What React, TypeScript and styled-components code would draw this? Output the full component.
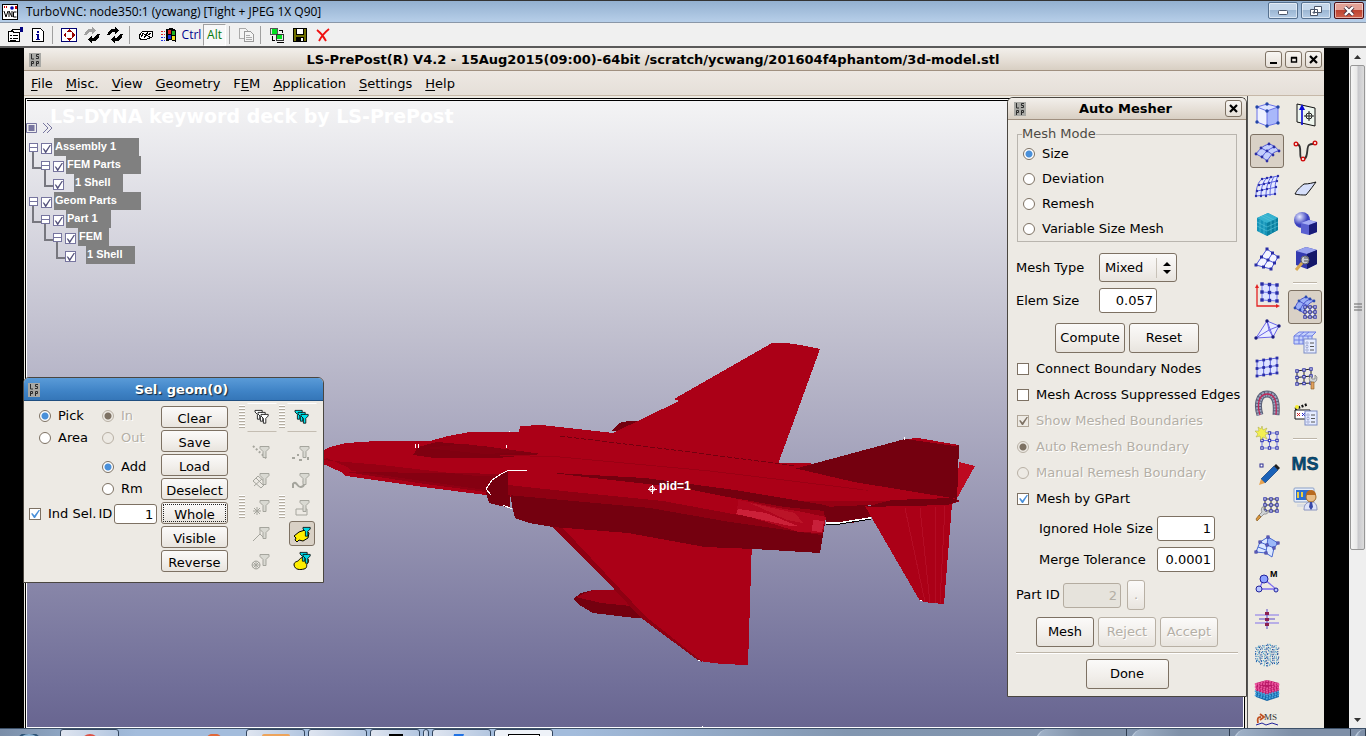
import React from "react";
import styled, { createGlobalStyle, css } from "styled-components";

const Global = createGlobalStyle`
  * { box-sizing: border-box; }
  body { margin: 0; background: #000; }
  button, input, select { font: inherit; color: inherit; margin: 0; }
  svg { display: block; }
`;

const Page = styled.div`
  height: 100vh;
  display: flex;
  flex-direction: column;
  overflow: hidden;
  font: 13px/16px "DejaVu Sans", sans-serif;
  color: #000;
`;

/* ---------- VNC client window ---------- */

const VncTitle = styled.header`
  flex: none;
  height: 23px;
  display: flex;
  align-items: center;
  gap: 8px;
  padding: 0 2px;
  border-top: 1px solid #333;
  border-bottom: 1px solid #8a97a8;
  background: linear-gradient(#93b0d0, #b7cfe9);
  font: 12px/16px "Open Sans", sans-serif;
`;
const VncName = styled.span`
  flex: 1;
`;
const VncButtons = styled.div`
  display: flex;
  gap: 3px;
  align-self: flex-start;
  padding: 1px 0;
`;
const VncButton = styled.button<{ $close?: boolean }>`
  width: 30px;
  height: 17px;
  padding: 0;
  display: grid;
  place-items: center;
  border: 1px solid ${(p) => (p.$close ? "#4c1018" : "#56718f")};
  border-radius: 2px;
  box-shadow: inset 0 0 0 1px rgba(255, 255, 255, 0.5);
  background: ${(p) =>
    p.$close
      ? "linear-gradient(#e3a196 0 45%, #bd4331 50%, #d0604a)"
      : "linear-gradient(#c5d7ea 0 45%, #9cb7d3 50%, #b5cde6)"};
`;
const VncToolbar = styled.div`
  flex: none;
  height: 25px;
  display: flex;
  align-items: center;
  padding: 0 3px;
  background: #f0f0f0;
  border-bottom: 2px solid #5a5a5a;
  font: 12px/16px "Open Sans", sans-serif;
`;
const VncTool = styled.button<{ $pressed?: boolean; $tone?: string }>`
  width: 23px;
  height: 22px;
  padding: 0;
  display: grid;
  place-items: center;
  color: ${(p) => p.$tone || "#000"};
  border: 1px solid transparent;
  background: none;
  ${(p) =>
    p.$pressed &&
    css`
      background: #f8f8f8;
      border-color: #a0a0a0 #fff #fff #a0a0a0;
    `}
`;
const ToolGap = styled.span`
  width: 8px;
  height: 18px;
  background: linear-gradient(#a0a0a0, #a0a0a0) 3px 0 / 1px 100% no-repeat;
`;

const Desktop = styled.div`
  flex: 1;
  min-height: 0;
  display: flex;
  padding-left: 24px;
  background: #000;
`;
const ScrollRail = styled.div`
  flex: none;
  width: 17px;
  margin-left: 25px;
  display: flex;
  flex-direction: column;
  background: #efefef;
`;
const ScrollArrow = styled.button<{ $down?: boolean }>`
  height: 17px;
  padding: 0;
  border: 0;
  display: grid;
  place-items: center;
  background: none;
  svg {
    transform: ${(p) => (p.$down ? "rotate(180deg)" : "none")};
  }
`;
const ScrollTrack = styled.div`
  flex: 1;
  padding: 0 1px;
`;
const ScrollThumb = styled.div`
  height: 75%;
  display: grid;
  place-items: center;
  border: 1px solid #979797;
  border-radius: 2px;
  background: linear-gradient(90deg, #f5f5f5, #e8e8e8 45%, #c8c8cc 55%, #dcdcdc);
`;

/* ---------- LS-PrePost main window ---------- */

const Main = styled.main`
  flex: 1;
  min-width: 0;
  display: flex;
  flex-direction: column;
  background: #edeae2;
`;
const barFace = css`
  background: linear-gradient(#f2efeb, #e4ddd4 60%, #d8cfc3);
  border-bottom: 1px solid #a09080;
`;
const MainTitle = styled.header`
  flex: none;
  height: 23px;
  display: flex;
  align-items: center;
  gap: 3px;
  padding: 1px 2px 0 5px;
  font-weight: bold;
  ${barFace}
`;
const TitleText = styled.span`
  flex: 1;
  text-align: center;
`;
const FrameButton = styled.button`
  width: 17px;
  height: 17px;
  padding: 0;
  display: grid;
  place-items: center;
  border: 1px solid #7d7163;
  border-radius: 3px;
  background: linear-gradient(#f8f6f3, #e6e0d8);
`;
const Menu = styled.nav`
  flex: none;
  height: 25px;
  display: flex;
  align-items: center;
  gap: 13px;
  padding: 2px 7px 0;
  background: linear-gradient(#ede8e3, #e5dfd8);
  border-bottom: 1px solid #c6b8a8;
`;
const MenuLink = styled.a`
  color: #000;
  text-decoration: none;
  u {
    text-underline-offset: 2px;
  }
`;
const Work = styled.div`
  flex: 1;
  min-height: 0;
  display: flex;
`;
const Canvas = styled.section`
  position: relative;
  flex: 1;
  min-width: 0;
  margin: 2px 2px 0 1px;
  border: 1px solid #000;
  border-bottom: 0;
  box-shadow: inset 0 0 0 1px #fff, inset 0 2px 0 #000;
  background: linear-gradient(#f4f4f5, #c1c0cf 37%, #716f99 93%, #686590);
`;
const Scene = styled.svg`
  position: absolute;
  left: 0;
  top: 0;
  width: 100%;
  height: 100%;
`;
const Headline = styled.h1`
  margin: 0;
  padding: 9px 24px 0;
  font-size: 19px;
  line-height: 17px;
  height: 23px;
  color: #fff;
  white-space: nowrap;
`;
const TreeTools = styled.div`
  display: flex;
  align-items: center;
  gap: 5px;
  height: 12px;
  margin-bottom: 4px;
`;
const Tree = styled.ul`
  position: relative;
  list-style: none;
  margin: 0;
  padding: 0 0 0 2px;
  font: bold 11px/16px "Liberation Sans", sans-serif;
`;
const TreeRow = styled.li<{ $depth: number; $leaf?: boolean }>`
  position: relative;
  display: flex;
  align-items: center;
  height: 18px;
  padding-left: ${(p) => p.$depth * 12 + (p.$leaf ? 1 : 0)}px;
  ${(p) =>
    p.$depth > 0 &&
    css`
      &::before {
        content: "";
        position: absolute;
        left: ${p.$depth * 12 - 8}px;
        top: -4px;
        width: 10px;
        height: 15px;
        border-left: 2px solid #77777f;
        border-bottom: 2px solid #77777f;
      }
    `}
`;
const Twist = styled.button`
  position: relative;
  width: 9px;
  height: 9px;
  margin: 1px 3px 0 1px;
  padding: 0;
  border: 1px solid #77759f;
  background: linear-gradient(#77759f, #77759f) 0 3px / 100% 1px no-repeat #fff;
`;
const TreeCheck = styled.input`
  appearance: none;
  position: relative;
  width: 11px;
  height: 11px;
  margin: 3px 2px 0 0;
  border: 1px solid #77759f;
  background: #fff;
  &::after {
    content: "";
    position: absolute;
    inset: 1px 0 0 0;
    background: #55537c;
    clip-path: polygon(8% 45%, 22% 45%, 42% 72%, 85% 0, 100% 0, 45% 100%, 36% 100%);
  }
`;
const TreeLabel = styled.label<{ $w: number; $indent?: boolean }>`
  width: ${(p) => p.$w}px;
  height: 18px;
  margin-left: ${(p) => (p.$indent ? 8 : 0)}px;
  padding-left: 1px;
  background: #808080;
  color: #fff;
  white-space: nowrap;
`;
const Pid = styled.span`
  position: absolute;
  left: 633px;
  top: 379px;
  font: bold 12px/16px "Liberation Sans", sans-serif;
  color: #fff;
`;

/* ---------- icon strips ---------- */

const Strips = styled.aside`
  flex: none;
  display: flex;
  align-items: flex-start;
  gap: 4px;
  width: 77px;
  padding: 2px 2px 0 2px;
  border-left: 1px solid #555;
  overflow: hidden;
`;
const Strip = styled.div`
  display: flex;
  flex-direction: column;
  gap: 2px;
`;
const StripButton = styled.button<{ $on?: boolean }>`
  flex: none;
  width: 34px;
  height: 34px;
  padding: 0;
  border: 1px solid ${(p) => (p.$on ? "#7d7163" : "transparent")};
  border-radius: 3px;
  background: ${(p) => (p.$on ? "#d9d1c6" : "none")};
  svg {
    margin: -1px;
  }
`;
const StripRule = styled.hr`
  width: 24px;
  height: 2px;
  margin: 4px auto 4px;
  border: 0;
  background: linear-gradient(#bdb5a8 50%, #fff 50%);
`;

/* ---------- dialogs ---------- */

const Dialog = styled.section<{ $place: "right" | "left" }>`
  position: absolute;
  background: #edeae4;
  border: 1px solid #4a4640;
  border-radius: 6px 6px 0 0;
  ${(p) =>
    p.$place === "right"
      ? css`
          right: -3px;
          top: -2px;
          width: 240px;
        `
      : css`
          left: -3px;
          top: 278px;
          width: 301px;
        `}
`;
const DialogTitle = styled.header<{ $blue?: boolean }>`
  height: ${(p) => (p.$blue ? 23 : 22)}px;
  display: flex;
  align-items: center;
  padding: 0 4px 0 6px;
  font-weight: bold;
  border-radius: 5px 5px 0 0;
  ${barFace}
  ${(p) =>
    p.$blue &&
    css`
      color: #fff;
      padding: 2px 0 0 4px;
      text-shadow: 1px 1px 1px #123;
      background: linear-gradient(#5a9bd8, #3f83c6 60%, #3576b8);
      border-bottom-color: #204f80;
    `}
`;

const Push = styled.button<{ $w: number; $h?: number; $low?: boolean; $focus?: boolean }>`
  width: ${(p) => p.$w}px;
  height: ${(p) => p.$h || 30}px;
  padding: ${(p) => (p.$low ? "4px 0 0" : "0")};
  border: 1px solid #7d7163;
  border-radius: 3px;
  background: linear-gradient(#fbfaf9, #f1eeea 60%, #e8e4de);
  line-height: 16px;
  white-space: nowrap;
  ${(p) => p.$focus && "outline: 1px dotted #222; outline-offset: -3px;"}
  &:disabled {
    color: #b4afa6;
    border-color: #b8b0a4;
    text-shadow: 1px 1px 0 #fff;
  }
`;
const Field = styled.input<{ $w: number; $h?: number }>`
  width: ${(p) => p.$w}px;
  height: ${(p) => p.$h || 25}px;
  padding: 0 3px;
  border: 1px solid #7d7163;
  border-radius: 3px;
  background: #fff;
  text-align: right;
  &:disabled {
    color: #b4afa6;
    background: #e6e3dc;
    border-color: #b4aca0;
  }
`;
const Option = styled.label<{ $off?: boolean; $gap?: number }>`
  display: flex;
  align-items: center;
  gap: ${(p) => p.$gap || 7}px;
  white-space: nowrap;
  ${(p) => p.$off && "color: #b4afa6; text-shadow: 1px 1px 0 #fff;"}
`;
const Tick = styled.input`
  appearance: none;
  flex: none;
  position: relative;
  width: 12px;
  height: 12px;
  border: 1px solid #7d7163;
  background: #fff;
  &:checked::after {
    content: "";
    position: absolute;
    inset: 1px 0 1px 1px;
    background: #4a90d9;
    clip-path: polygon(0 45%, 18% 40%, 38% 68%, 85% 0, 100% 0, 45% 100%, 33% 100%);
  }
  &:disabled {
    background: #edeae4;
    border-color: #b0a698;
  }
  &:disabled::after {
    background: #7d7163;
  }
`;
const Dot = styled.input`
  appearance: none;
  flex: none;
  width: 12px;
  height: 12px;
  border: 1px solid #7d7163;
  border-radius: 50%;
  background: #fff;
  &:checked {
    background: radial-gradient(circle, #4a90d9 0 3px, #fff 4px);
  }
  &:disabled {
    background: #edeae4;
    border-color: #b8b0a4;
  }
  &:disabled:checked {
    background: radial-gradient(circle, #7d7163 0 3px, #edeae4 4px);
  }
`;

/* Auto Mesher body */
const MesherBody = styled.div`
  display: flex;
  flex-direction: column;
  padding: 6px 8px 7px;
`;
const ModeGroup = styled.fieldset`
  display: flex;
  flex-direction: column;
  gap: 9px;
  margin: 0 1px 11px;
  padding: 4px 5px;
  border: 1px solid #b9b5ae;
  legend {
    padding: 0;
    margin-left: -1px;
    color: #4d4a45;
  }
`;
const FormLine = styled.div<{ $h: number; $labelW: number; $indent?: number }>`
  display: flex;
  align-items: center;
  height: ${(p) => p.$h}px;
  padding-left: ${(p) => p.$indent || 0}px;
  > label {
    width: ${(p) => p.$labelW}px;
    white-space: nowrap;
  }
  > button {
    margin-left: 6px;
  }
`;
const SelectWrap = styled.div`
  display: grid;
  width: 78px;
  > * {
    grid-area: 1 / 1;
  }
  svg {
    justify-self: end;
    align-self: center;
    pointer-events: none;
  }
`;
const Select = styled.select`
  appearance: none;
  height: 29px;
  padding: 0 5px;
  border: 1px solid #7d7163;
  border-radius: 3px;
  background: linear-gradient(#fbfaf9, #f1eeea 60%, #e8e4de);
`;
const ButtonLine = styled.div<{ $top?: number }>`
  display: flex;
  justify-content: center;
  gap: 4px;
  margin-top: ${(p) => p.$top || 0}px;
`;
const CheckList = styled.div`
  display: flex;
  flex-direction: column;
  gap: 10px;
  margin: 8px 0 9px 1px;
`;
const Rule = styled.hr`
  width: 100%;
  height: 2px;
  margin: 5px 0 5px;
  border: 0;
  background: linear-gradient(#bdb5a8 50%, #fff 50%);
`;

/* Selection dialog body */
const SelBody = styled.div`
  display: flex;
  height: 181px;
  padding-left: 1px;
`;
const SelOptions = styled.div`
  width: 136px;
  padding: 7px 0 0 4px;
`;
const SelColumns = styled.div`
  display: grid;
  grid-template-columns: 63px auto;
  padding-left: 10px;
`;
const SelStack = styled.div`
  display: flex;
  flex-direction: column;
  gap: 6px;
`;
const Split = styled.div`
  height: 1px;
`;
const IdLine = styled.div`
  display: flex;
  align-items: center;
  gap: 2px;
  margin-top: 7px;
  white-space: nowrap;
`;
const SelButtons = styled.div`
  display: flex;
  flex-direction: column;
  gap: 2px;
  padding-top: 5px;
`;
const Filters = styled.div`
  display: grid;
  grid-template-columns: 6px 32px 6px 32px;
  grid-template-rows: 30px 7px repeat(5, 27px);
  column-gap: 1px;
  padding: 1px 0 0 11px;
`;
const Grip = styled.div<{ $row: number }>`
  grid-row: ${(p) => p.$row};
  width: 6px;
  height: 24px;
  align-self: center;
  background: repeating-linear-gradient(#fff 0 1px, #b3aca0 1px 2px, transparent 2px 3px);
`;
const FilterButton = styled.button<{ $row: number; $col: number; $on?: boolean; $flat?: boolean }>`
  grid-row: ${(p) => p.$row};
  grid-column: ${(p) => p.$col};
  align-self: center;
  justify-self: center;
  width: ${(p) => (p.$on ? 26 : 30)}px;
  height: ${(p) => (p.$flat ? 29 : 25)}px;
  padding: 0;
  display: grid;
  place-items: center;
  background: ${(p) => (p.$on ? "#d9d1c6" : "none")};
  border: 1px solid ${(p) => (p.$on ? "#7d7163" : "transparent")};
  border-radius: ${(p) => (p.$on ? 3 : 0)}px;
  ${(p) => p.$flat && "border-color: #fff transparent #c4bdb2;"}
`;

/* ---------- Windows taskbar ---------- */

const Taskbar = styled.footer`
  flex: none;
  height: 8px;
  display: flex;
  overflow: hidden;
  gap: 3px;
  border-top: 1px solid #3c5068;
  background: linear-gradient(90deg, #7b8ea8 0, #90a8c6 5%, #a3bcdc 10%, #a3bcdc 42%, #8296b0 62%, #7f90a8);
`;
const Task = styled.button<{ $bare?: boolean; $w?: number; $bright?: boolean }>`
  flex: none;
  width: ${(p) => p.$w || 59}px;
  height: 30px;
  padding: 4px 0 0;
  display: grid;
  justify-items: center;
  align-items: start;
  border: 1px solid ${(p) => (p.$bare ? "transparent" : "#33465e")};
  border-radius: 3px;
  background: ${(p) =>
    p.$bare ? "none" : p.$bright ? "#eef2f8" : "linear-gradient(90deg, #dfe5f0, #b3c6e0)"};
`;
const TaskSpace = styled.span`
  flex: 1;
`;
const Ghost = styled.span<{ $w: number }>`
  flex: none;
  width: ${(p) => p.$w}px;
  height: 30px;
  border-right: 1px solid #2f3d50;
  border-left: 2px solid #b9c8da;
  border-radius: 14px 0 0 0;
  background: linear-gradient(90deg, #a0b2c8, #7f90a8 50%);
`;

/* ---------- drawing helpers ---------- */

type P = [number, number];

/* A patch of nodes and edges spanned between four corners, arched by `bow`. */
function Patch({
  a, b, c, d, n = 3, m = 3, bow = 0, fill = "#dfe4ff", line = "#7078ee", dot = "#2a2ea6", r = 1, hollow = false,
}: {
  a: P; b: P; c: P; d: P; n?: number; m?: number; bow?: number; fill?: string; line?: string; dot?: string; r?: number; hollow?: boolean;
}) {
  const at = (u: number, v: number): P => [
    (1 - u) * (1 - v) * a[0] + u * (1 - v) * b[0] + u * v * c[0] + (1 - u) * v * d[0],
    (1 - u) * (1 - v) * a[1] + u * (1 - v) * b[1] + u * v * c[1] + (1 - u) * v * d[1] - bow * 4 * u * (1 - u),
  ];
  const rows: P[][] = [];
  for (let j = 0; j <= m; j++) {
    const row: P[] = [];
    for (let i = 0; i <= n; i++) row.push(at(i / n, j / m));
    rows.push(row);
  }
  const path = (pts: P[]) => "M" + pts.map((p) => p.join(" ")).join("L");
  const cols = rows[0].map((_, i) => rows.map((row) => row[i]));
  return (
    <g>
      <path d={path([...rows[0], ...[...rows[m]].reverse()]) + "Z"} fill={fill} />
      {[...rows, ...cols].map((pts, i) => (
        <path key={i} d={path(pts)} fill="none" stroke={line} strokeWidth={1} />
      ))}
      {rows.flat().map((p, i) => (
        <rect key={i} x={p[0] - r} y={p[1] - r} width={r * 2} height={r * 2} fill={hollow ? "#fff" : dot} stroke={dot} strokeWidth={hollow ? 1 : 0} />
      ))}
    </g>
  );
}

const Wrench = ({ x = 0, y = 0 }: { x?: number; y?: number }) => (
  <g transform={`translate(${x} ${y})`}>
    <path d="M8 1a4 4 0 0 0-2 6L3 10l2 2 3-3a4 4 0 0 0 5-4l-3 2-2-2z" fill="#cfd3d6" stroke="#777" strokeWidth="0.7" />
    <path d="M3 10l-3 4 1 2 4-4z" fill="#d8963c" stroke="#8a5a1c" strokeWidth="0.7" />
  </g>
);

const Sheet = ({ x, y }: { x: number; y: number }) => (
  <g transform={`translate(${x} ${y})`}>
    <rect width="12" height="14" fill="#e6ecff" stroke="#7d8cc4" />
    <path d="M2 3h2v2H2zM2 6.500h2v2H2zM2 10h2v2H2z" fill="#fff" stroke="#7d8cc4" strokeWidth="0.6" />
    <path d="M6 4h4M6 7.500h4M6 11h4" stroke="#555" />
  </g>
);

const noise = (n: number) => {
  const v = Math.sin(n * 12.9898) * 43758.5453;
  return v - Math.floor(v);
};

/* A hexagonal cloud of particles on a jittered lattice. */
const cloud = Array.from({ length: 156 }, (_, i) => {
  const x = 5 + (i % 12) * 2 + noise(i + 1) * 1.2;
  const y = 5 + Math.floor(i / 12) * 1.8 + noise(i + 500);
  const lean = Math.abs(x - 17) * 0.25;
  return { x, y, keep: y > 5 + lean && y < 28 - lean, tone: i % 3 };
}).filter((p) => p.keep);

/* Layers of packed spheres, pink over blue. */
const spheres = Array.from({ length: 72 }, (_, i) => {
  const row = Math.floor(i / 9);
  const x = 6 + (i % 9) * 2.8 - (row % 2) * 0.4;
  const sag = 3 - Math.abs(x - 17) * 0.28;
  return { x, y: row === 0 ? 10 - sag : row === 1 ? 10 : 9 + row * 2.1 - 2 + sag, pink: row < 5 };
});

const stripLeft: { name: string; on?: boolean; art: React.ReactNode }[] = [
  {
    name: "Shape mesher",
    art: (
      <g>
        <path d="M7 9l10-3 11 3v16l-11 3-10-4z" fill="#dfe6ff" />
        <path d="M17 13l11-4v16l-11 3z" fill="#a9b8fa" />
        <path d="M7 9l10 4v15L7 24z" fill="#eef1ff" />
        <path d="M7 9l10-3 11 3-11 4zM7 9v15l10 4V13M28 9v16l-11 3" fill="none" stroke="#6a72e8" />
        {[[7, 9], [17, 6], [28, 9], [17, 13], [7, 24], [28, 25], [17, 28]].map(([x, y], i) => (
          <circle key={i} cx={x} cy={y} r="1.700" fill="#2446a8" />
        ))}
      </g>
    ),
  },
  {
    name: "Auto mesher",
    on: true,
    art: (
      <g>
        <path d="M6 20c4-5 6-8 13-10 4 1 7 3 10 7-5 0-8 4-12 10-3-3-7-5-11-7z" fill="#c3cefc" />
        <path d="M6 20c4-5 6-8 13-10 4 1 7 3 10 7-5 0-8 4-12 10-3-3-7-5-11-7zM11 14c4 2 8 4 12 7M12 23c3-5 7-8 12-10" fill="none" stroke="#5058d4" />
        {[[6, 20], [11, 14], [19, 10], [24, 13], [29, 17], [23, 21], [17, 27], [12, 23], [17, 17]].map(([x, y], i) => (
          <circle key={i} cx={x} cy={y} r="1.400" fill="#2a2ea6" />
        ))}
      </g>
    ),
  },
  {
    name: "Solid mesher",
    art: (
      <g>
        <path d="M6 26L12 9l16-3v17l-8 3z" fill="#e4e9ff" />
        <path d="M6 26c0-8 2-14 6-17M11 26c0-8 2-15 6-18M16 26c0-8 2-15 5-19M20 26c0-8 1-15 4-19M25 24c0-7 0-13 3-18M12 9l16-3M9 15l18-4M7 21l20-4M6 26l19-2" fill="none" stroke="#5d66e2" />
        {[[12, 9], [17, 8], [21, 7], [28, 6], [9, 15], [14, 14], [19, 13], [27, 11], [7, 21], [12, 20], [17, 19], [26, 17], [6, 26], [11, 26], [16, 26], [25, 24]].map(([x, y], i) => (
          <circle key={i} cx={x} cy={y} r="1.200" fill="#2a2ea6" />
        ))}
      </g>
    ),
  },
  {
    name: "Block mesher",
    art: (
      <g>
        <path d="M7 12l11-5 10 5v12l-11 6L7 25z" fill="#1593b8" />
        <path d="M7 12l11-5 10 5-11 5z" fill="#35b2cf" />
        <path d="M17 17l11-5v12l-11 6z" fill="#0a7f9f" />
        <path d="M10 14v12M14 15v13M7 16l10 5 11-5M7 20l10 5 11-5M21 15v12M25 13v12M11 10l10 5M14 9l10 5" stroke="#5cc8dc" strokeWidth="0.6" fill="none" />
      </g>
    ),
  },
  {
    name: "N-line mesher",
    art: <Patch a={[17, 7]} b={[28, 15]} c={[21, 27]} d={[6, 23]} n={2} m={2} r={1.5} fill="#f4f5ff" line="#4a52d8" />,
  },
  {
    name: "2D mesher",
    art: (
      <g>
        <path d="M7 9v19h20" fill="none" stroke="#e32222" strokeWidth="1.300" />
        <path d="M5 10l2-4 2 4zM26 26l4 2-4 2z" fill="#e32222" />
        <Patch a={[12, 6]} b={[27, 7]} c={[27, 23]} d={[12, 22]} n={2} m={2} r={1.7} fill="#dfe4ff" />
      </g>
    ),
  },
  {
    name: "Tetra mesher",
    art: (
      <g>
        <path d="M17 7L6 24l17-1 6-11z" fill="#e9ecff" />
        <path d="M17 7L6 24l17-1 6-11zM17 7l6 16M6 24l13-8 10-4M19 16l4 7M17 7l2 9" fill="none" stroke="#6a65e8" />
        {[[17, 7], [6, 24], [23, 23], [29, 12]].map(([x, y], i) => (
          <circle key={i} cx={x} cy={y} r="1.700" fill="#1b1b80" />
        ))}
      </g>
    ),
  },
  { name: "Surface mesh", art: <Patch a={[7, 11]} b={[27, 8]} c={[27, 23]} d={[7, 26]} n={3} m={2} r={1.4} line="#5a60dc" /> },
  {
    name: "Sweep mesh",
    art: (
      <g fill="none">
        <path d="M10 29C7 20 8 8 17 8s10 10 9 21" stroke="#5a6076" strokeWidth="7" />
        <path d="M10 29C7 20 8 8 17 8s10 10 9 21" stroke="#9aa4c0" strokeWidth="5" strokeDasharray="2 1" />
        <path d="M10 29C7 20 8 8 17 8s10 10 9 21" stroke="#c02858" strokeWidth="1.300" />
      </g>
    ),
  },
  {
    name: "Element creation",
    art: (
      <g>
        <Patch a={[12, 11]} b={[27, 11]} c={[27, 26]} d={[12, 26]} n={2} m={2} r={1.2} hollow fill="none" />
        <path d="M12 4l1 4 4-2-2 4 4 1-4 2 2 4-4-2-2 3-1-4-4 1 2-3-3-3 4 0-1-4 3 2z" fill="#f4f052" stroke="#a8a840" strokeWidth="0.500" />
      </g>
    ),
  },
  {
    name: "Element edit",
    art: (
      <g>
        <rect x="10" y="6" width="3" height="3" fill="#fff" stroke="#2a2a90" />
        <path d="M11 21L24 8l4 4-13 13z" fill="#1b62b8" stroke="#0d3a78" strokeWidth="0.700" />
        <path d="M24 8l2-2 4 4-2 2z" fill="#222" />
        <path d="M11 21l4 4-6 2z" fill="#e7a350" />
      </g>
    ),
  },
  {
    name: "Node edit",
    art: (
      <g>
        <Patch a={[15, 5]} b={[27, 5]} c={[27, 17]} d={[15, 17]} n={2} m={2} r={1.2} hollow fill="none" line="#222" />
        <Wrench x={6} y={11} />
      </g>
    ),
  },
  {
    name: "Morphing",
    art: (
      <g>
        <path d="M6 22l4-10 8-5 10 6-4 5-2 9-6-4z" fill="#dbe8ff" />
        <path d="M18 7l10 6-4 5-7-3z" fill="#9cb8f8" />
        <path d="M6 22l4-10 8-5 10 6-4 5-2 9-6-4zM10 12l7 3 7 3M18 7l-1 8-1 8M8 17l8 3" fill="none" stroke="#4a6ad0" />
        {[[6, 22], [10, 12], [18, 7], [28, 13], [24, 18], [17, 15], [16, 23]].map(([x, y], i) => (
          <rect key={i} x={x - 1} y={y - 1} width="2" height="2" fill="#fff" stroke="#22229a" />
        ))}
      </g>
    ),
  },
  {
    name: "Mass element",
    art: (
      <g>
        <path d="M14 13L9 23h17z" fill="none" stroke="#7c6cf0" strokeWidth="1.300" />
        <circle cx="14" cy="13" r="4" fill="#8da2ff" stroke="#22229a" />
        <circle cx="9" cy="23" r="3" fill="#b9c6ff" stroke="#22229a" />
        <circle cx="26" cy="24" r="2" fill="#b9c6ff" stroke="#22229a" />
        <text x="20" y="11" fontSize="9" fontWeight="bold" fontFamily="Liberation Sans, sans-serif">M</text>
      </g>
    ),
  },
  {
    name: "Gap element",
    art: (
      <g>
        <path d="M5 13h24M5 21h24" stroke="#a79ae8" strokeWidth="1.600" />
        <path d="M9 17h16M17 7v20" stroke="#5a4ac8" />
        <path d="M15 10h4v3h-4zM15 16h4v3h-4zM15 21h4v3h-4z" fill="#8a2050" />
      </g>
    ),
  },
  {
    name: "SPH generation",
    art: (
      <g>
        {cloud.map((p, i) => (
          <rect key={i} x={p.x} y={p.y} width="1.100" height="1.100" fill={["#1e62b0", "#3d9cc4", "#1b4a94"][p.tone]} />
        ))}
      </g>
    ),
  },
  {
    name: "DEM generation",
    art: (
      <g>
        <path d="M6 9l11-3 12 3v8l-12 4-11-4z" fill="#b81866" />
        <path d="M6 17l11 4 12-4v6l-12 4-11-4z" fill="#1668a8" />
        {spheres.map((s, i) => (
          <circle key={i} cx={s.x} cy={s.y} r="1" fill={s.pink ? "#ec5aa0" : "#4ba6e0"} />
        ))}
      </g>
    ),
  },
  {
    name: "Mesh output",
    art: (
      <g>
        <path d="M8 13c-1-5 0-6 3-6M10 4l4 3-4 3" stroke="#c05020" strokeWidth="1.800" fill="none" />
        <text x="14" y="10" fontSize="9" fontFamily="Liberation Serif, serif" fill="#333">MS</text>
        <path d="M6 15l6-2 4 2 6-2 6 2" stroke="#22229a" fill="none" />
      </g>
    ),
  },
];

type StripItem = { name?: string; on?: boolean; rule?: boolean; art?: React.ReactNode };
const stripRight: StripItem[] = [
  {
    name: "Reference geometry",
    art: (
      <g>
        <path d="M9 6l18 4v18L9 24z" fill="#eef6ee" stroke="#111" />
        <path d="M14 27V11" stroke="#0909d8" strokeWidth="1.600" />
        <path d="M11 12l3-6 3 6z" fill="#0909d8" />
        <circle cx="21" cy="18" r="3" fill="none" stroke="#222" />
        <path d="M21 13v10M16 18h10" stroke="#222" />
      </g>
    ),
  },
  {
    name: "Curve",
    art: (
      <g>
        <path d="M8 10c8 0 1 15 7 15s3-12 6-14 4 0 6-2" fill="none" stroke="#333" strokeWidth="1.800" />
        {[[8, 10], [15, 25], [27, 9]].map(([x, y], i) => (
          <circle key={i} cx={x} cy={y} r="1.800" fill="#fff" stroke="#d01010" strokeWidth="1.400" />
        ))}
      </g>
    ),
  },
  { name: "Surface", art: <path d="M7 24c2-4 4-6 9-10 5 0 8-1 12-2-3 4-5 7-10 13-4 0-7 0-11-1z" fill="#d6dffa" stroke="#111" /> },
  {
    name: "Solid",
    art: (
      <g>
        <defs>
          <radialGradient id="ball" cx="35%" cy="30%">
            <stop offset="0" stopColor="#e8ebff" />
            <stop offset="1" stopColor="#3a40be" />
          </radialGradient>
        </defs>
        <circle cx="14" cy="14" r="8" fill="url(#ball)" />
        <path d="M13 17l8-3 8 2v10l-8 3-8-2z" fill="#5a60d0" />
        <path d="M13 17l8-3 8 2-8 3z" fill="#a5acf4" />
        <path d="M21 19l8-3v10l-8 3z" fill="#191b78" />
      </g>
    ),
  },
  {
    name: "Geometry tools",
    art: (
      <g>
        <path d="M8 9l10-4 11 3v14l-10 5-11-4z" fill="#343ab0" />
        <path d="M8 9l10-4 11 3-10 4z" fill="#98a2ee" />
        <path d="M19 12l10-4v14l-10 5z" fill="#14176a" />
        <circle cx="17" cy="18" r="4" fill="#c8ccd8" stroke="#666" />
        <path d="M16 16h4M16 19h4" stroke="#555" />
        <path d="M14 21l-6 7" stroke="#d8a850" strokeWidth="3" />
      </g>
    ),
  },
  { rule: true },
  {
    name: "Mesh",
    on: true,
    art: (
      <g>
        <path d="M7 18c2-6 5-9 11-11l8 4c-6 2-8 6-10 12z" fill="#9db0f6" />
        <path d="M7 18c2-6 5-9 11-11l8 4c-6 2-8 6-10 12zM11 11l9 5M12 20c2-5 5-9 10-11" fill="none" stroke="#4a54cc" />
        {[[7, 18], [11, 11], [18, 7], [26, 11], [22, 9], [12, 20]].map(([x, y], i) => (
          <circle key={i} cx={x} cy={y} r="1.400" fill="#2a4ab0" />
        ))}
        <Patch a={[17, 17]} b={[27, 17]} c={[27, 27]} d={[17, 27]} n={2} m={2} r={1.2} hollow fill="#e8e8ee" line="#222" />
      </g>
    ),
  },
  {
    name: "Model",
    art: (
      <g>
        <path d="M6 10l5-4h17l-4 4v8H6z" fill="#c6d2fa" />
        <path d="M6 10l5-4h17l-4 4v8H6zM6 10h18M6 14h18M11 10v8M15 10v8M20 10v8M11 10l5-4M16 10l5-4" fill="none" stroke="#6f7ee4" />
        <Sheet x={16} y={13} />
      </g>
    ),
  },
  {
    name: "Element tools",
    art: (
      <g>
        <Patch a={[9, 9]} b={[23, 7]} c={[23, 21]} d={[9, 22]} n={2} m={2} r={1.2} hollow fill="none" line="#222" />
        <path d="M21 16a4 4 0 1 0 6-3l0 4-3 0-1-3z" fill="#d0d4d6" stroke="#777" strokeWidth="0.700" />
        <path d="M23 20h3v7h-3z" fill="#e0a060" stroke="#8a5a1c" strokeWidth="0.600" />
      </g>
    ),
  },
  {
    name: "Post",
    art: (
      <g>
        <path d="M7 12h15v9H7z" fill="#fff" stroke="#111" />
        <path d="M7 11l13-5" stroke="#111" strokeWidth="2.500" strokeDasharray="2 1.500" />
        <circle cx="9" cy="9" r="2" fill="#f4ec30" />
        <path d="M9 15l3 3M12 15l-3 3" stroke="#d02020" />
        <path d="M14 15l3 3M17 15l-3 3" stroke="#2020d0" />
        <Sheet x={17} y={13} />
      </g>
    ),
  },
  { rule: true },
  {
    name: "Metal stamping",
    art: (
      <text x="17" y="24" textAnchor="middle" fontSize="18" fontWeight="bold" fontFamily="Liberation Sans, sans-serif" fill="#06507e" stroke="#02263c" strokeWidth="0.500">
        MS
      </text>
    ),
  },
  {
    name: "Assistant",
    art: (
      <g>
        <rect x="6" y="6" width="20" height="14" rx="1" fill="#e8eef8" stroke="#8aa0c8" />
        <rect x="8" y="8" width="14" height="10" fill="#2f6fd0" />
        <path d="M10 10v6M14 10v5" stroke="#f0d040" strokeWidth="2" />
        <path d="M9 22h10v3H9z" fill="#d8dce4" />
        <path d="M16 28c0-6 3-8 7-8s6 2 6 8z" fill="#dfe4f8" stroke="#8a94c0" />
        <circle cx="23" cy="15" r="5" fill="#e8bd88" stroke="#a06828" />
        <path d="M18 13a5 5 0 0 1 10 0z" fill="#b86a20" />
        <path d="M22 20h2l1 5-2 3-2-3z" fill="#3848a8" />
      </g>
    ),
  },
];

function StripIcon({ children }: { children: React.ReactNode }) {
  return (
    <svg width="34" height="34" viewBox="0 0 34 34">
      {children}
    </svg>
  );
}

const AppMark = () => (
  <svg width="12" height="14" viewBox="0 0 12 14">
    <rect width="12" height="14" fill="#a8a8a4" />
    <path d="M2.500 1v5H5M10 1.500H7.500v2h2v2H7M2.500 13V8.500h2v2h-2M7.500 13V8.500h2v2h-2" stroke="#2c2c2c" fill="none" />
  </svg>
);
const Cross = () => (
  <svg width="9" height="9" viewBox="0 0 9 9">
    <path d="M1 1l7 7M8 1L1 8" stroke="#000" strokeWidth="2.200" />
  </svg>
);

const funnel = "M0 .500h9v2l-3 3v6h-3v-6l-3-3z";
function Funnel({ x, y, fill = "#d9d9d2", line = "#a5a59d", k = 1 }: { x: number; y: number; fill?: string; line?: string; k?: number }) {
  return <path d={funnel} transform={`translate(${x} ${y}) scale(${k})`} fill={fill} stroke={line} />;
}
const Triple = ({ fill }: { fill: string }) => (
  <svg width="28" height="24" viewBox="0 0 28 24">
    <Funnel x={7} y={5} k={0.8} fill={fill} line="#000" />
    <Funnel x={10} y={7} k={0.8} fill={fill} line="#000" />
    <Funnel x={13} y={9} k={0.8} fill={fill} line="#000" />
  </svg>
);
const greys: { row: number; col: number; name: string; art: React.ReactNode }[] = [
  { row: 3, col: 2, name: "Filter points", art: <path d="M5 5l14 13" stroke="#a5a59d" strokeWidth="2" strokeDasharray="2 2" /> },
  { row: 3, col: 4, name: "Filter nodes", art: <path d="M4 17h3M9 14h2M11 19h3M20 16v3" stroke="#a5a59d" strokeWidth="2" /> },
  { row: 4, col: 2, name: "Filter edges", art: <path d="M5 13l5-5 8 7-5 5zM8 10l8 8M6 18l8-7" stroke="#a5a59d" fill="none" /> },
  { row: 4, col: 4, name: "Filter curves", art: <path d="M5 20v-4c4-4 4 4 8 3s4-5 2-6" stroke="#a5a59d" strokeWidth="2" fill="none" /> },
  { row: 5, col: 2, name: "Filter vertices", art: <path d="M9 12v8M5 16h8M6 13l6 6M12 13l-6 6" stroke="#a5a59d" /> },
  { row: 5, col: 4, name: "Filter faces", art: <path d="M8 14h11v6H8z" stroke="#a5a59d" fill="none" /> },
  { row: 6, col: 2, name: "Filter lines", art: <path d="M5 19l7-7V5M12 12l5 5" stroke="#a5a59d" fill="none" /> },
  { row: 7, col: 2, name: "Filter spots", art: <path d="M8 12v8M4 16h8M5 13l6 6M11 13l-6 6M8 12a4 4 0 1 0 .1 0" stroke="#a5a59d" fill="none" /> },
];

/* ---------- the aircraft ---------- */

function Phantom() {
  const red = "#ab0017";
  const deep = "#8e0012";
  const dark = "#74000f";
  return (
    <g transform="translate(-26 -99)" shapeRendering="crispEdges">
      <path d="M612 431l7-8 9-2h12l-8 12z" fill={dark} />
      <path d="M613 433l66-32-5-2 98-56 14 0 15 2 19 4-24 66-18 49z" fill={red} />
      <path d="M959 462l16 4-19 34z" fill="#bd0a20" />
      <path d="M573 599l8-6 12-3h24l28 28-10 0-42-5-12-7z" fill={dark} />
      <path d="M576 597l17-7h22l16 16-30-3z" fill="#9c0015" />
      <path d="M553 527l62 63 25 27 59 44 23 3 26 1 4-125-190-20z" fill={red} />
      <path d="M553 527l62 63 25 27 59 44 4 1-58-46-25-27-58-62z" fill={deep} />
      <path d="M322 451l8-4 16-4 30-2h54l18-5 22-4h49l1-6 22-1 71 8 165 30 31 0 85 20 66 18-8 3-87 0-10 8-29 5-340-22-63-8-77-11-5-4-20-9z" fill={red} />
      <path d="M322 460l60 5 94 11 80-2 180 27 216 0-8 4-79 0-10 9-29 5-334-28-63-9-77-11-5-4-20-9z" fill="#960013" />
      <path d="M346 472l72 11 68 9 24-6 0-12-60-1z" fill={dark} opacity="0.500" />
      <path d="M413 455l5-8 19-5 46 4 59 8-10 1-35 3h-62z" fill={dark} opacity="0.800" />
      <path d="M425 448l40-4 60 8-40 2z" fill="#840011" />
      <path d="M519 471l66 9 120 13 80 14 60 6 -20-8-90-15-90-12z" fill={dark} />
      <path d="M560 436l130 16 106 14" stroke={dark} fill="none" strokeDasharray="5 2" />
      <path d="M500 455l60 2 150 14 180 22" stroke="#9b0014" fill="none" />
      <path d="M794 469l111-30 13-1 41 7-2 56-60-8z" fill={dark} />
      <path d="M905 439l13-1 41 7-4 1z" fill={red} />
      <path d="M794 468l60 14 104 17-4 3-60-6-95-20z" fill={red} />
      <path d="M826 523l26 0 21-6-5-12-45 2z" fill={dark} />
      <path d="M486 493l4-10 10-9 10-3 0 37-21-5z" fill={dark} />
      <path d="M508 470h22l55 7 98 11 54 11 36 8 30 5 23 5-6 36-66-4-49-2-77-14-75-6-24-4-14-5-3-12z" fill={dark} />
      <path d="M508 470h22l55 7 98 11 54 11 36 8-12 11-28-3-70-13-90-9-65-6z" fill={red} />
      <path d="M508 485l65 7 90 9 70 13 90 14-1 7-92-13-80-14-142-13z" fill={deep} />
      <path d="M738 500l35 7 30 5 23 5-3 16-24-1-62-19z" fill="#b0061e" />
      <path d="M738 509l28 4 32 13-8 0-54-12z" fill="#cb2038" />
      <path d="M750 503l45 10 8 10-16-3z" fill="#bb1428" />
      <path d="M813 520l11 1-2 11-10-1z" fill="#c8203a" />
      <path d="M865 506l87-2-8 100-13-1-11-2-47-81z" fill={red} />
      <path d="M905 508l20 94M920 508l10 95M935 507l1 96M945 506l-5 97" stroke="#b30c24" />
      <path d="M947 505l13-4-8-3-60 2-27 7z" fill={dark} />
      <path d="M826 523h14l31-5" stroke="#fff" strokeWidth="2" fill="none" />
      <path d="M826 524h14l31-5" stroke="#000" fill="none" />
      <path d="M527 471l-18-1-8 4-9 6-6 9 5 6M503 505l9 4" stroke="#fff" fill="none" />
      <path d="M415 444v4M418 444v4M506 445v3M509 431h1M904 437v3M698 660h2M920 600h2M702 726v2" stroke="#fff" />
      <circle cx="652" cy="489" r="2.500" fill="none" stroke="#fff" shapeRendering="auto" />
      <path d="M652 485v9M648 489h9" stroke="#fff" />
    </g>
  );
}

/* ---------- VNC toolbar art ---------- */

const Ic = ({ children }: { children: React.ReactNode }) => (
  <svg width="16" height="16" viewBox="0 0 16 16" shapeRendering="crispEdges">
    {children}
  </svg>
);
const cycle = (first: string) => (
  <Ic>
    <path d="M0 8l2-4 3-2h3V0l4 3.500L8 7V5H5L3 8z" fill={first} />
    <path d="M16 7l-2 5-3 2H8v2l-4-3.500L8 9v2h2l3-4z" fill="#000" />
  </Ic>
);
const vncTools: ({ gap: true } | { gap?: false; name: string; art: React.ReactNode; pressed?: boolean; tone?: string })[] = [
  { name: "Connection options", art: <Ic><path d="M1.500 4.500h11v10h-11z" fill="#fff" stroke="#000" /><path d="M3 8h2M6 8h5M3 11h2M6 11h5M3 13h6" stroke="#000" /><path d="M4 4l3-2h6v3l-4 1z" fill="#fff" stroke="#000" /><path d="M13 0h3v5h-3z" fill="#000080" /></Ic> },
  { name: "Connection info", art: <Ic><path d="M2.500 1.500h8l3 3v10h-11z" fill="#fff" stroke="#000" /><path d="M7 4h2v2H7zM6 7h3v5h1v1H6v-1h1V8H6z" fill="#000090" /></Ic> },
  { gap: true },
  { name: "Full screen", art: <Ic><path d="M.500 1.500h15v13H.500z" fill="#fff" stroke="#000070" /><path d="M8 2l3 3H5zM8 14l3-3H5zM2 8l3-3v6zM14 8l-3-3v6z" fill="#900" /></Ic> },
  { name: "Refresh", art: cycle("#a0a0a0") },
  { name: "Lossless refresh", art: cycle("#000") },
  { gap: true },
  { name: "Send keys", art: <Ic><path d="M1 9l3-4 5-1 6 1-1 5-5 2-5 1-3-2z" fill="#fff" stroke="#000" /><path d="M3 10l3-4M6 11l4-6M9 9l4-3M4 6l8 4" stroke="#000" /></Ic> },
  { name: "Start menu", art: <Ic><path d="M5 2l6-1 4 2v12l-5-2-5 1z" fill="#000" /><path d="M7 3h3v4H7z" fill="#e02020" /><path d="M11 4h3v4h-3z" fill="#20b020" /><path d="M7 8h3v4H7z" fill="#2030e0" /><path d="M11 9h3v4h-3z" fill="#f0e020" /><path d="M0 4h4M0 7h4" stroke="#e02020" strokeDasharray="2 1" /><path d="M0 10h4M0 13h4" stroke="#2030e0" strokeDasharray="2 1" /></Ic> },
  { name: "Ctrl", tone: "#00008b", art: "Ctrl" },
  { name: "Alt", tone: "#067a06", pressed: true, art: "Alt" },
  { gap: true },
  { name: "Copy", art: <Ic><path d="M1.500 1.500h6l2 2v8h-8z" fill="#f4f4f4" stroke="#aaa" /><path d="M6.500 4.500h6l3 3v7h-9z" fill="#f4f4f4" stroke="#999" /><path d="M8 8h4M8 10h6M8 12h6" stroke="#aaa" /></Ic> },
  { gap: true },
  { name: "New connection", art: <Ic><path d="M1.500 1.500h7v6h-7z" fill="#e8e8e8" stroke="#555" /><path d="M3 2h5v5H3z" fill="#00e020" /><path d="M7.500 7.500h7v6h-7z" fill="#e8e8e8" stroke="#333" /><path d="M8 8h5v4H8z" fill="#00e020" /><path d="M10 3h3v3M3 9v4h3M8 15h7" stroke="#000" fill="none" /></Ic> },
  { name: "Save", art: <Ic><path d="M1 1h14v14H1z" fill="#000" /><path d="M2 2h2v6h8V2h2v12H2z" fill="#707000" /><path d="M5 2h6v5H5z" fill="#fff" /><path d="M4 10h8v5H4z" fill="#000" /><path d="M9 11h2v3H9z" fill="#fff" /></Ic> },
  { name: "Disconnect", art: <svg width="16" height="16" viewBox="0 0 16 16"><path d="M2 3c4 3 7 7 9 11M14 2C9 6 6 10 4 14" stroke="#f01010" strokeWidth="1.800" fill="none" /></svg> },
];

const menu = [["", "F", "ile"], ["", "M", "isc."], ["", "V", "iew"], ["", "G", "eometry"], ["F", "E", "M"], ["", "A", "pplication"], ["", "S", "ettings"], ["", "H", "elp"]];

const tree: { label: string; depth: number; w: number; leaf?: boolean }[] = [
  { label: "Assembly 1", depth: 0, w: 85 },
  { label: "FEM Parts", depth: 1, w: 75 },
  { label: "1 Shell", depth: 2, w: 49, leaf: true },
  { label: "Geom Parts", depth: 0, w: 87 },
  { label: "Part 1", depth: 1, w: 45 },
  { label: "FEM", depth: 2, w: 31 },
  { label: "1 Shell", depth: 3, w: 49, leaf: true },
];

function SelDialog() {
  return (
    <Dialog $place="left" aria-label="Sel. geom(0)">
      <DialogTitle $blue>
        <AppMark />
        <TitleText>Sel. geom(0)</TitleText>
      </DialogTitle>
      <SelBody>
        <SelOptions>
          <SelColumns>
            <SelStack>
              <Option><Dot type="radio" name="how" defaultChecked />Pick</Option>
              <Option><Dot type="radio" name="how" />Area</Option>
            </SelStack>
            <SelStack>
              <Option $off><Dot type="radio" name="side" defaultChecked disabled />In</Option>
              <Option $off><Dot type="radio" name="side" disabled />Out</Option>
              <Split />
              <Option><Dot type="radio" name="op" defaultChecked />Add</Option>
              <Option><Dot type="radio" name="op" />Rm</Option>
            </SelStack>
          </SelColumns>
          <IdLine>
            <Option><Tick type="checkbox" defaultChecked />Ind Sel.</Option>
            <label htmlFor="sel-id">ID</label>
            <Field id="sel-id" $w={43} $h={20} defaultValue="1" />
          </IdLine>
        </SelOptions>
        <SelButtons>
          {["Clear", "Save", "Load", "Deselect", "Whole", "Visible", "Reverse"].map((t) => (
            <Push key={t} $w={67} $h={22} $low $focus={t === "Whole"}>{t}</Push>
          ))}
        </SelButtons>
        <Filters>
          <Grip $row={1} />
          <FilterButton $row={1} $col={2} $flat aria-label="No filters"><Triple fill="#fff" /></FilterButton>
          <Grip $row={1} />
          <FilterButton $row={1} $col={4} $flat aria-label="All filters"><Triple fill="#00e4ec" /></FilterButton>
          {greys.map((g) => (
            <FilterButton key={g.name} $row={g.row} $col={g.col} aria-label={g.name} disabled>
              <svg width="28" height="24" viewBox="0 0 28 24">
                {g.art}
                <Funnel x={12} y={5} />
              </svg>
            </FilterButton>
          ))}
          <Grip $row={5} />
          <Grip $row={5} />
          <FilterButton $row={6} $col={4} $on aria-label="Filter solids">
            <svg width="24" height="24" viewBox="0 0 24 24">
              <path d="M4 14l5-4 6-2 4 3-1 5-5 3-4-1-2 2-2-2 1-2z" fill="#ffee00" stroke="#000" />
              <Funnel x={13} y={5} k={0.8} fill="#00d8e4" line="#000" />
            </svg>
          </FilterButton>
          <FilterButton $row={7} $col={4} aria-label="Filter parts">
            <svg width="28" height="24" viewBox="0 0 28 24">
              <path d="M6 16c0-4 4-3 5-5s5-4 8-2 1 5 0 6 1 4-3 5-9 1-10-4z" fill="#ffee00" stroke="#000" />
              <Funnel x={12} y={3} k={0.8} fill="#00d8e4" line="#000" />
              <Funnel x={15} y={5} k={0.8} fill="#00d8e4" line="#000" />
            </svg>
          </FilterButton>
        </Filters>
      </SelBody>
    </Dialog>
  );
}

function Mesher() {
  return (
    <Dialog $place="right" aria-label="Auto Mesher">
      <DialogTitle>
        <AppMark />
        <TitleText>Auto Mesher</TitleText>
        <FrameButton aria-label="Close"><Cross /></FrameButton>
      </DialogTitle>
      <MesherBody>
        <ModeGroup>
          <legend>Mesh Mode</legend>
          {["Size", "Deviation", "Remesh", "Variable Size Mesh"].map((t, i) => (
            <Option key={t}><Dot type="radio" name="mode" defaultChecked={i === 0} />{t}</Option>
          ))}
        </ModeGroup>
        <FormLine $h={29} $labelW={83}>
          <label htmlFor="mesh-type">Mesh Type</label>
          <SelectWrap>
            <Select id="mesh-type" defaultValue="Mixed">
              <option>Mixed</option>
            </Select>
            <svg width="22" height="24" viewBox="0 0 22 24">
              <path d="M1.500 2v20" stroke="#c8c2b8" />
              <path d="M8 10l4-4 4 4zM8 14l4 4 4-4z" />
            </svg>
          </SelectWrap>
        </FormLine>
        <FormLine $h={37} $labelW={83}>
          <label htmlFor="elem">Elem Size</label>
          <Field id="elem" $w={58} defaultValue="0.057" />
        </FormLine>
        <ButtonLine $top={4}>
          <Push $w={70}>Compute</Push>
          <Push $w={70}>Reset</Push>
        </ButtonLine>
        <CheckList>
          <Option><Tick type="checkbox" />Connect Boundary Nodes</Option>
          <Option><Tick type="checkbox" />Mesh Across Suppressed Edges</Option>
          <Option $off><Tick type="checkbox" defaultChecked disabled />Show Meshed Boundaries</Option>
          <Option $off><Dot type="radio" name="remesh" defaultChecked disabled />Auto Remesh Boundary</Option>
          <Option $off><Dot type="radio" name="remesh" disabled />Manual Remesh Boundary</Option>
          <Option><Tick type="checkbox" defaultChecked />Mesh by GPart</Option>
        </CheckList>
        <FormLine $h={25} $labelW={118} $indent={23}>
          <label htmlFor="hole">Ignored Hole Size</label>
          <Field id="hole" $w={58} defaultValue="1" />
        </FormLine>
        <FormLine $h={37} $labelW={118} $indent={23}>
          <label htmlFor="tol">Merge Tolerance</label>
          <Field id="tol" $w={58} defaultValue="0.0001" />
        </FormLine>
        <FormLine $h={34} $labelW={47}>
          <label htmlFor="part">Part ID</label>
          <Field id="part" $w={58} defaultValue="2" disabled />
          <Push $w={18} disabled>.</Push>
        </FormLine>
        <ButtonLine $top={5}>
          <Push $w={58}>Mesh</Push>
          <Push $w={58} disabled>Reject</Push>
          <Push $w={58} disabled>Accept</Push>
        </ButtonLine>
        <Rule />
        <ButtonLine>
          <Push $w={83}>Done</Push>
        </ButtonLine>
      </MesherBody>
    </Dialog>
  );
}

export default function App() {
  return (
    <Page>
      <Global />
      <VncTitle>
        <svg width="16" height="16" viewBox="0 0 16 16">
          <rect x=".500" y=".500" width="15" height="15" fill="#fff" stroke="#000" />
          <path d="M2 7l2 6 2-6M7 13V7l3 6V7M14.500 8h-3v5h3" stroke="#000" fill="none" />
          <path d="M2 3h4" stroke="#c00" strokeWidth="2" strokeDasharray="1 1" />
          <circle cx="10" cy="4" r="1.800" fill="#00a" />
          <path d="M13 2h2v3h-2z" fill="#c00" />
        </svg>
        <VncName>TurboVNC: node350:1 (ycwang) [Tight + JPEG 1X Q90]</VncName>
        <VncButtons>
          <VncButton aria-label="Minimize">
            <svg width="12" height="10" viewBox="0 0 12 10"><rect x="1.500" y="4.500" width="9" height="4" rx="1" fill="#fff" stroke="#4a5568" /></svg>
          </VncButton>
          <VncButton aria-label="Restore">
            <svg width="12" height="12" viewBox="0 0 12 12"><path d="M4.500 1.500h7v6h-7zM.500 4.500h7v6h-7zM3 7h2v1H3z" fill="#fff" stroke="#4a5568" /></svg>
          </VncButton>
          <VncButton $close aria-label="Close">
            <svg width="12" height="10" viewBox="0 0 12 10"><path d="M2 1l8 8M10 1L2 9" stroke="#4a3040" strokeWidth="4" /><path d="M2 1l8 8M10 1L2 9" stroke="#fff" strokeWidth="2.400" /></svg>
          </VncButton>
        </VncButtons>
      </VncTitle>
      <VncToolbar>
        {vncTools.map((t, i) =>
          t.gap ? <ToolGap key={i} /> : (
            <VncTool key={i} $pressed={t.pressed} $tone={t.tone} aria-label={t.name}>{t.art}</VncTool>
          )
        )}
      </VncToolbar>
      <Desktop>
        <Main>
          <MainTitle>
            <AppMark />
            <TitleText>LS-PrePost(R) V4.2 - 15Aug2015(09:00)-64bit /scratch/ycwang/201604f4phantom/3d-model.stl</TitleText>
            <FrameButton aria-label="Minimize"><svg width="9" height="9"><path d="M1 7h7v2H1z" /></svg></FrameButton>
            <FrameButton aria-label="Maximize"><svg width="9" height="9"><path d="M2.500 3h5v4h-5zM2 2.500h6" fill="none" stroke="#000" strokeWidth="1.400" /></svg></FrameButton>
            <FrameButton aria-label="Close"><Cross /></FrameButton>
          </MainTitle>
          <Menu>
            {menu.map(([a, k, b]) => (
              <MenuLink key={k} href="#">{a}<u>{k}</u>{b}</MenuLink>
            ))}
          </Menu>
          <Work>
            <Canvas>
              <Scene><Phantom /></Scene>
              <Headline>LS-DYNA keyword deck by LS-PrePost</Headline>
              <TreeTools>
                <svg width="11" height="12" viewBox="0 0 11 12"><path d="M.500 1.500h10v9H.500z" fill="#eee" stroke="#77759f" /><path d="M2.500 3h6v6h-6z" fill="#77759f" /></svg>
                <svg width="11" height="12" viewBox="0 0 11 12"><path d="M1 1l5 5-5 5M5 1l5 5-5 5" fill="none" stroke="#77759f" /></svg>
              </TreeTools>
              <Tree>
                {tree.map((t, i) => (
                  <TreeRow key={i} $depth={t.depth} $leaf={t.leaf}>
                    {!t.leaf && <Twist aria-label={`Collapse ${t.label}`} />}
                    <TreeCheck type="checkbox" defaultChecked id={`node-${i}`} />
                    <TreeLabel htmlFor={`node-${i}`} $w={t.w} $indent={t.leaf}>{t.label}</TreeLabel>
                  </TreeRow>
                ))}
              </Tree>
              <Pid>pid=1</Pid>
              <SelDialog />
              <Mesher />
            </Canvas>
            <Strips>
              <Strip>
                {stripLeft.map((s) => (
                  <StripButton key={s.name} $on={s.on} aria-label={s.name}><StripIcon>{s.art}</StripIcon></StripButton>
                ))}
              </Strip>
              <Strip>
                {stripRight.map((s, i) =>
                  s.rule ? <StripRule key={i} /> : (
                    <StripButton key={i} $on={s.on} aria-label={s.name}><StripIcon>{s.art}</StripIcon></StripButton>
                  )
                )}
              </Strip>
            </Strips>
          </Work>
        </Main>
        <ScrollRail>
          <ScrollArrow aria-label="Scroll up"><svg width="7" height="4"><path d="M0 4L3.500 0 7 4z" fill="#333" /></svg></ScrollArrow>
          <ScrollTrack>
            <ScrollThumb><svg width="8" height="8"><path d="M0 1h8M0 4h8M0 7h8" stroke="#666" /></svg></ScrollThumb>
          </ScrollTrack>
          <ScrollArrow $down aria-label="Scroll down"><svg width="7" height="4"><path d="M0 4L3.500 0 7 4z" fill="#333" /></svg></ScrollArrow>
        </ScrollRail>
      </Desktop>
      <Taskbar>
        <Task $bare $w={57} aria-label="Start"><svg width="30" height="28"><circle cx="15" cy="12" r="13" fill="#8fb4d4" stroke="#2d5478" strokeWidth="2" /></svg></Task>
        <Task aria-label="Browser"><svg width="18" height="20"><circle cx="9" cy="9" r="9" fill="#dd5144" /></svg></Task>
        <Task $bare aria-label="Files"><svg width="24" height="20"><path d="M0 3h8l3 3h11v14H0z" fill="#ccd3c8" /></svg></Task>
        <Task $bare aria-label="Media"><svg width="18" height="20"><circle cx="9" cy="9" r="8" fill="#fff" stroke="#e0683a" strokeWidth="3" /></svg></Task>
        <Task aria-label="Slides"><svg width="28" height="20"><rect width="28" height="20" rx="2" fill="#eda45c" /><rect x="5" y="2" width="18" height="14" fill="#dc6a3c" /></svg></Task>
        <Task aria-label="Folder" />
        <Task $w={50} aria-label="Viewer"><svg width="16" height="20"><rect x="2" width="14" height="20" fill="#000" /><rect x="4" y="2" width="10" height="14" fill="#fff" /></svg></Task>
        <Task $w={6} aria-label="Viewer group" />
        <Task aria-label="Editor"><svg width="24" height="20"><path d="M4 0h10l-6 20H0z" fill="#2273e4" /><path d="M12 4h8v14h-8z" fill="#8a96a8" /></svg></Task>
        <Task $bright aria-label="Terminal"><svg width="32" height="20"><rect x=".500" y=".500" width="31" height="20" fill="#fff" stroke="#000" /><path d="M18 6h6" stroke="#ccc" strokeWidth="4" /></svg></Task>
        <TaskSpace />
        <Ghost $w={92} />
        <Ghost $w={100} />
        <Ghost $w={118} />
        <Ghost $w={12} />
      </Taskbar>
    </Page>
  );
}
